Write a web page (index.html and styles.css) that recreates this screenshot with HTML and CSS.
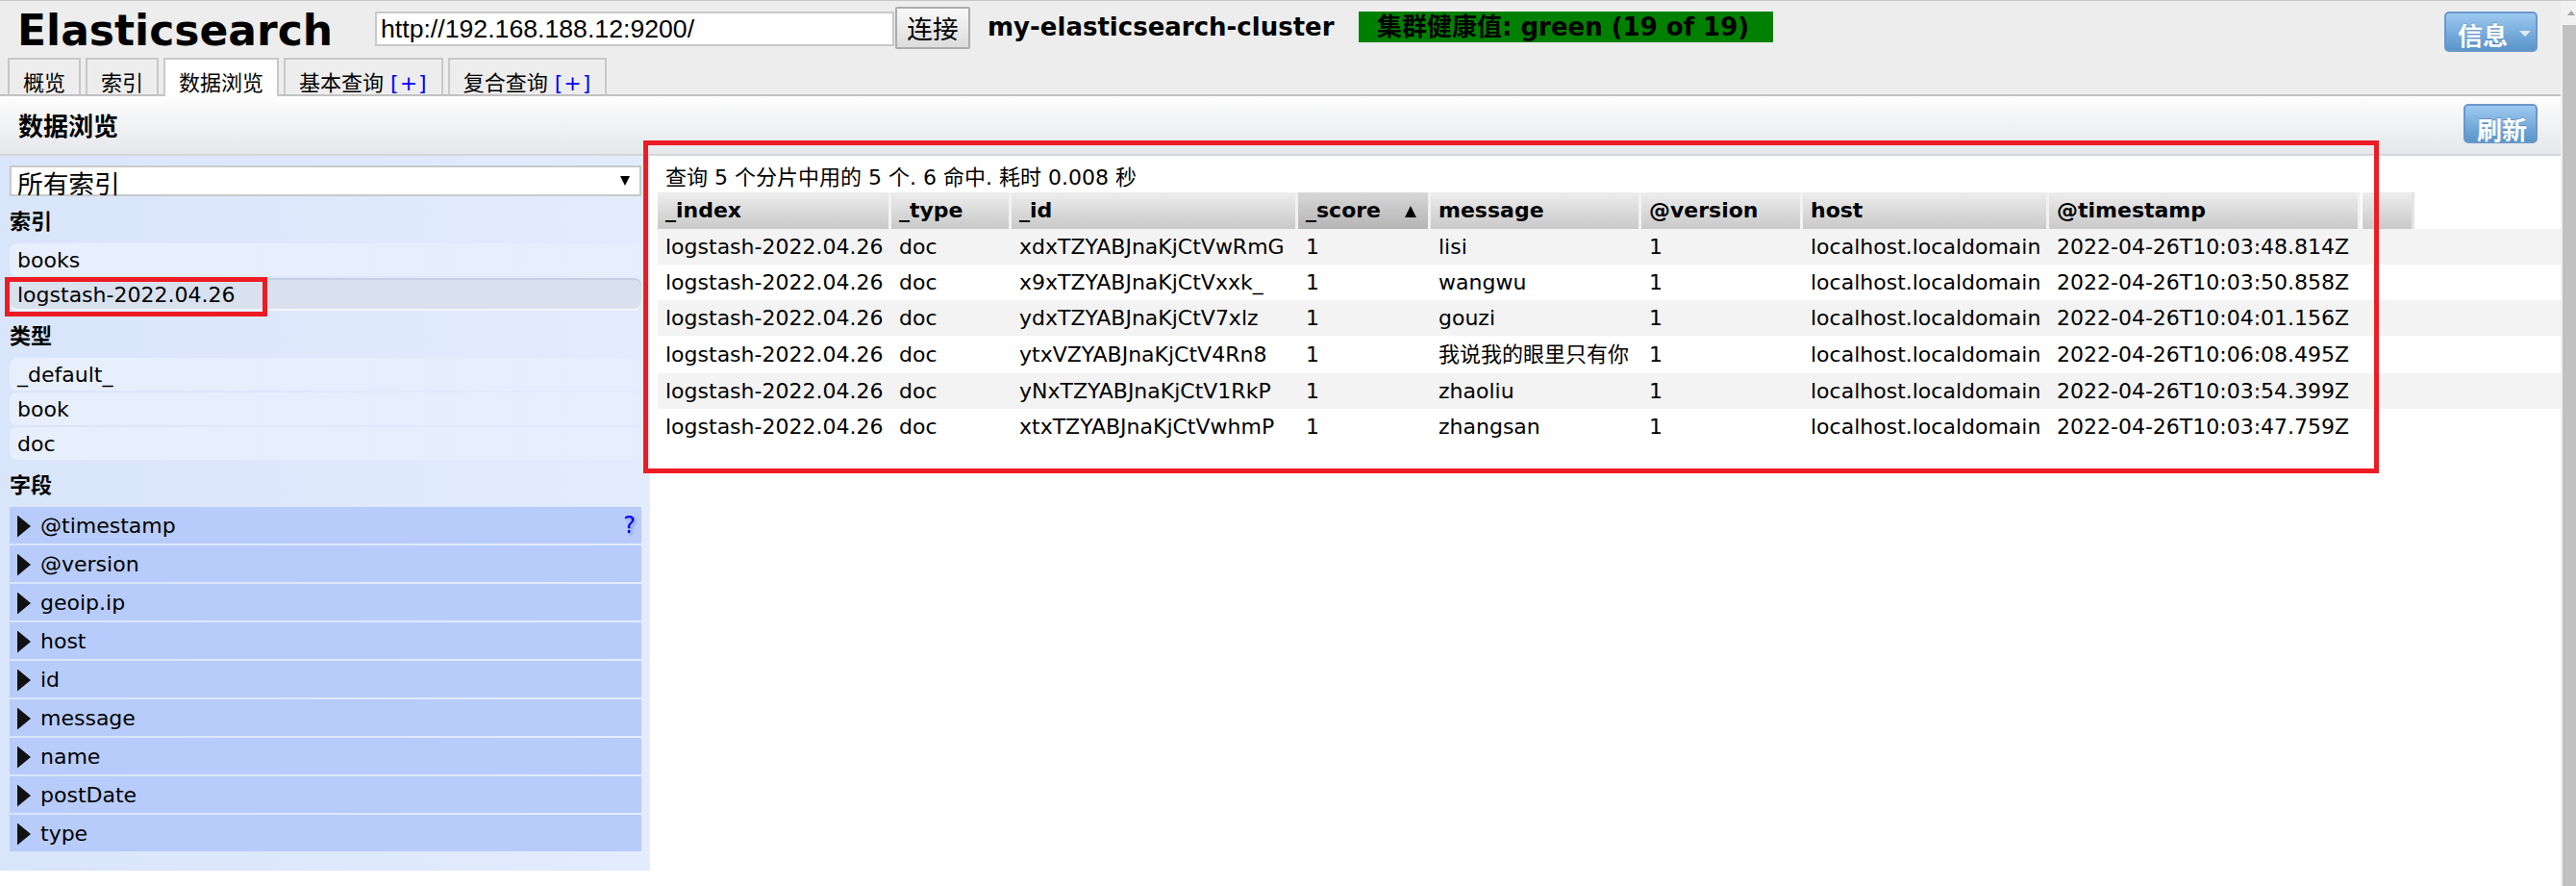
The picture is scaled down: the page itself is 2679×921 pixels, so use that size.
FILE: index.html
```html
<!DOCTYPE html>
<html lang="zh-CN">
<head>
<meta charset="utf-8">
<title>Elasticsearch</title>
<link rel="stylesheet" href="styles.css">
</head>
<body>
<div class="page">
  <div class="app">
    <div class="top">
      <div class="header">
        <h1 class="title">Elasticsearch</h1>
        <input class="url" type="text" value="http://192.168.188.12:9200/">
        <button class="connect">连接</button>
        <span class="cluster">my-elasticsearch-cluster</span>
        <span class="health">集群健康值: green (19 of 19)</span>
        <button class="btn-blue info"><span>信息</span><span class="caret"></span></button>
      </div>
      <div class="tabs">
        <div class="tab">概览</div>
        <div class="tab">索引</div>
        <div class="tab active">数据浏览</div>
        <div class="tab">基本查询 <span class="plus">[+]</span></div>
        <div class="tab">复合查询 <span class="plus">[+]</span></div>
      </div>
    </div>
    <div class="panel-head">
      <h2 class="panel-title">数据浏览</h2>
      <button class="btn-blue refresh">刷新</button>
    </div>
    <div class="content">
      <aside class="side">
        <div class="select"><span class="select-text">所有索引</span><span class="select-arrow"></span></div>
        <div class="side-h">索引</div>
        <div class="item">books</div>
        <div class="item selected">logstash-2022.04.26</div>
        <div class="side-h">类型</div>
        <div class="item">_default_</div>
        <div class="item">book</div>
        <div class="item">doc</div>
        <div class="side-h">字段</div>
        <div class="field"><span class="tri"></span><span>@timestamp</span><span class="help">?</span></div>
        <div class="field"><span class="tri"></span><span>@version</span></div>
        <div class="field"><span class="tri"></span><span>geoip.ip</span></div>
        <div class="field"><span class="tri"></span><span>host</span></div>
        <div class="field"><span class="tri"></span><span>id</span></div>
        <div class="field"><span class="tri"></span><span>message</span></div>
        <div class="field"><span class="tri"></span><span>name</span></div>
        <div class="field"><span class="tri"></span><span>postDate</span></div>
        <div class="field"><span class="tri"></span><span>type</span></div>
      </aside>
      <main class="results">
        <div class="summary">查询 5 个分片中用的 5 个. 6 命中. 耗时 0.008 秒</div>
        <div class="thead">
          <div class="th">_index</div>
          <div class="th">_type</div>
          <div class="th">_id</div>
          <div class="th sorted">_score<span class="sort-up"></span></div>
          <div class="th">message</div>
          <div class="th">@version</div>
          <div class="th">host</div>
          <div class="th">@timestamp</div>
          <div class="th-gap"></div>
          <div class="th th-extra"></div>
        </div>
        <div class="trow alt">
          <div class="td">logstash-2022.04.26</div><div class="td">doc</div><div class="td">xdxTZYABJnaKjCtVwRmG</div><div class="td">1</div><div class="td">lisi</div><div class="td">1</div><div class="td">localhost.localdomain</div><div class="td">2022-04-26T10:03:48.814Z</div>
        </div>
        <div class="trow">
          <div class="td">logstash-2022.04.26</div><div class="td">doc</div><div class="td">x9xTZYABJnaKjCtVxxk_</div><div class="td">1</div><div class="td">wangwu</div><div class="td">1</div><div class="td">localhost.localdomain</div><div class="td">2022-04-26T10:03:50.858Z</div>
        </div>
        <div class="trow alt">
          <div class="td">logstash-2022.04.26</div><div class="td">doc</div><div class="td">ydxTZYABJnaKjCtV7xlz</div><div class="td">1</div><div class="td">gouzi</div><div class="td">1</div><div class="td">localhost.localdomain</div><div class="td">2022-04-26T10:04:01.156Z</div>
        </div>
        <div class="trow tall">
          <div class="td">logstash-2022.04.26</div><div class="td">doc</div><div class="td">ytxVZYABJnaKjCtV4Rn8</div><div class="td">1</div><div class="td">我说我的眼里只有你</div><div class="td">1</div><div class="td">localhost.localdomain</div><div class="td">2022-04-26T10:06:08.495Z</div>
        </div>
        <div class="trow alt">
          <div class="td">logstash-2022.04.26</div><div class="td">doc</div><div class="td">yNxTZYABJnaKjCtV1RkP</div><div class="td">1</div><div class="td">zhaoliu</div><div class="td">1</div><div class="td">localhost.localdomain</div><div class="td">2022-04-26T10:03:54.399Z</div>
        </div>
        <div class="trow">
          <div class="td">logstash-2022.04.26</div><div class="td">doc</div><div class="td">xtxTZYABJnaKjCtVwhmP</div><div class="td">1</div><div class="td">zhangsan</div><div class="td">1</div><div class="td">localhost.localdomain</div><div class="td">2022-04-26T10:03:47.759Z</div>
        </div>
      </main>
    </div>
  </div>
  <div class="scroll">
    <div class="scroll-up"><span class="scroll-arrow"></span></div>
    <div class="scroll-thumb"></div>
  </div>
</div>
<div class="mark mark-big"></div>
<div class="mark mark-small"></div>
</body>
</html>
```

FILE: styles.css
```css
* { box-sizing: border-box; }
html, body { margin: 0; padding: 0; background: #fff; }
body {
  width: 2679px;
  height: 921px;
  overflow: hidden;
  position: relative;
  font-family: "DejaVu Sans", "Noto Sans CJK SC", sans-serif;
  font-size: 22px;
  color: #000;
}

.page {
  display: flex;
  height: 921px;
  border-top: 1px solid #c8c8c8;
}
.app { width: 2663px; flex: none; }

/* scrollbar */
.scroll {
  width: 16px;
  flex: none;
  background: #f1f1f1;
  display: flex;
  flex-direction: column;
}
.scroll-up { height: 25px; padding: 10px 0 0 7px; }
.scroll-arrow {
  display: block;
  width: 0; height: 0;
  border-left: 4.5px solid transparent;
  border-right: 4.5px solid transparent;
  border-bottom: 5px solid #a3a3a3;
}
.scroll-thumb { flex: 1; margin-left: 2px; background: #c1c1c1; }

/* header */
.top { background: #ededed; }
.header {
  display: flex;
  align-items: flex-start;
  height: 59px;
  padding: 0 24px 0 18px;
}
.title {
  margin: 5px 0 0;
  width: 372px;
  flex: none;
  font-size: 44px;
  line-height: 51px;
  font-weight: bold;
  white-space: nowrap;
}
.url {
  margin: 11px 0 0;
  width: 540px;
  height: 36px;
  flex: none;
  border: 2px solid #c9c9c9;
  padding: 0 4px;
  background: #fff;
  color: #000;
  font-family: "Liberation Sans", Arial, sans-serif;
  font-size: 26.67px;
  outline: none;
}
.connect {
  margin: 6px 0 0 1px;
  width: 78px;
  height: 44px;
  flex: none;
  padding: 0;
  border: 2px solid #acacac;
  border-radius: 2px;
  background: linear-gradient(#f8f8f8, #dcdcdc);
  color: #000;
  font-family: "Noto Sans CJK SC", sans-serif;
  font-size: 26.67px;
  line-height: 38px;
}
.cluster {
  margin: 12px 0 0 18px;
  width: 386px;
  flex: none;
  font-size: 26px;
  line-height: 30px;
  font-weight: bold;
  white-space: nowrap;
}
.health {
  margin-top: 11px;
  width: 431px;
  height: 32px;
  flex: none;
  padding-left: 19px;
  background: #008000;
  color: #000;
  font-size: 26px;
  line-height: 32px;
  font-weight: bold;
  white-space: nowrap;
  overflow: hidden;
}
.btn-blue {
  border: 2px solid #6a97ca;
  border-radius: 5px;
  background: linear-gradient(#9cc9f0, #5a95ca);
  color: #fff;
  font-family: "Noto Sans CJK SC", sans-serif;
  font-size: 26px;
  font-weight: bold;
  line-height: 26px;
  text-shadow: 0 -1px 0 rgba(40, 80, 130, 0.35);
  text-align: left;
}
.info {
  margin: 11px 0 0 auto;
  width: 97px;
  height: 42px;
  flex: none;
  padding: 9px 0 0 12px;
  display: flex;
  align-items: flex-start;
}
.caret {
  margin: 9px 0 0 12px;
  width: 0; height: 0;
  border-left: 6.5px solid transparent;
  border-right: 6.5px solid transparent;
  border-top: 6px solid #e2ebf7;
}

/* tabs */
.tabs {
  display: flex;
  align-items: flex-start;
  gap: 5px;
  height: 40px;
  padding-left: 8px;
  border-bottom: 2px solid #c2c2c2;
}
.tab {
  height: 38px;
  border: 2px solid #c8c8c8;
  border-bottom: 0;
  padding: 14px 14px 0;
  font-size: 22px;
  line-height: 22px;
  background: #ededed;
  white-space: nowrap;
  overflow: hidden;
}
.tab.active { height: 40px; background: #fff; }
.plus { color: #0000ff; letter-spacing: 1px; }

/* panel head */
.panel-head {
  display: flex;
  align-items: flex-start;
  height: 62px;
  padding: 0 24px 0 19px;
  border-bottom: 2px solid #d4d7db;
  background: linear-gradient(#fdfdfd, #e5e7ea);
}
.panel-title {
  margin: 19px 0 0;
  font-size: 26px;
  line-height: 26px;
  font-weight: bold;
}
.refresh {
  margin: 8px 0 0 auto;
  width: 77px;
  height: 41px;
  padding: 10px 0 0 12px;
}

/* body */
.content { display: flex; align-items: flex-start; }
.side {
  width: 676px;
  flex: none;
  padding: 10px 9px 20px 10px;
  background: linear-gradient(to right, #d9e5fb, #e3ecfd);
}
.select {
  display: flex;
  align-items: flex-start;
  height: 32px;
  border: 2px solid #c9c9c9;
  background: #fff;
  padding: 5px 10px 0 6px;
  font-family: "Noto Sans CJK SC", sans-serif;
  font-size: 26.67px;
  line-height: 22px;
}
.select-arrow {
  margin: 4px 0 0 auto;
  width: 0; height: 0;
  border-left: 5px solid transparent;
  border-right: 5px solid transparent;
  border-top: 10px solid #000;
}
.side-h {
  margin-top: 16px;
  font-size: 22px;
  line-height: 22px;
  font-weight: bold;
}
.item {
  margin-top: 2px;
  height: 34px;
  line-height: 35px;
  padding-left: 8px;
  border-radius: 8px;
  background: linear-gradient(to right, rgba(255,255,255,0.38), rgba(255,255,255,0.12));
  white-space: nowrap;
}
.item.selected {
  background: #d8e1ed;
  box-shadow: inset 0 2px 0 #c5d0e0, inset 0 -2px 0 #f2f6fd;
}
.side-h + .item, .side-h + .field { margin-top: 11px; }
.field {
  display: flex;
  align-items: center;
  margin-top: 2px;
  height: 38px;
  line-height: 39px;
  padding: 0 6px 0 8px;
  background: #b8ccfb;
  white-space: nowrap;
}
.tri {
  width: 14px;
  height: 23px;
  margin: 2px 10px 0 0;
  background: #111;
  clip-path: polygon(0 0, 100% 50%, 0 100%);
}
.help {
  margin-left: auto;
  color: #0000ee;
  font-size: 24px;
  text-shadow: 2px 2px 3px rgba(40, 40, 110, 0.35);
}

/* results */
.results { flex: 1; padding: 12px 0 0 8px; }
.summary {
  padding-left: 8px;
  margin-bottom: 4px;
  line-height: 22px;
  white-space: nowrap;
}
.thead, .trow {
  display: grid;
  grid-template-columns: 243px 125px 298px 138px 219px 168px 256px 324px;
}
.thead { grid-template-columns: 243px 125px 298px 138px 219px 168px 256px 324px 2px 54px; }
.th {
  height: 38px;
  line-height: 38px;
  padding-left: 8px;
  font-weight: bold;
  background: linear-gradient(#ededed, #c9c9c9);
  box-shadow: inset -3px 0 0 #f2f2f2;
  white-space: nowrap;
  overflow: hidden;
}
.th.sorted { background: linear-gradient(#d7d7d7, #b5b5b5); }
.th-extra { box-shadow: inset -3px 0 0 #e4e4e4; }
.sort-up {
  display: inline-block;
  vertical-align: baseline;
  margin-left: 25px;
  width: 0; height: 0;
  border-left: 6px solid transparent;
  border-right: 6px solid transparent;
  border-bottom: 12px solid #000;
}
.trow { height: 37px; line-height: 37px; }
.trow.tall { height: 39px; line-height: 39px; }
.trow.alt { background: #f3f3f3; }
.td {
  padding-left: 8px;
  white-space: nowrap;
  overflow: hidden;
}

/* red annotation marks drawn over the screenshot */
.mark {
  position: absolute;
  border: 5px solid #ed1c24;
  pointer-events: none;
}
.mark-big { left: 669px; top: 146px; width: 1805px; height: 346px; }
.mark-small { left: 5px; top: 288px; width: 273px; height: 41px; }
```
